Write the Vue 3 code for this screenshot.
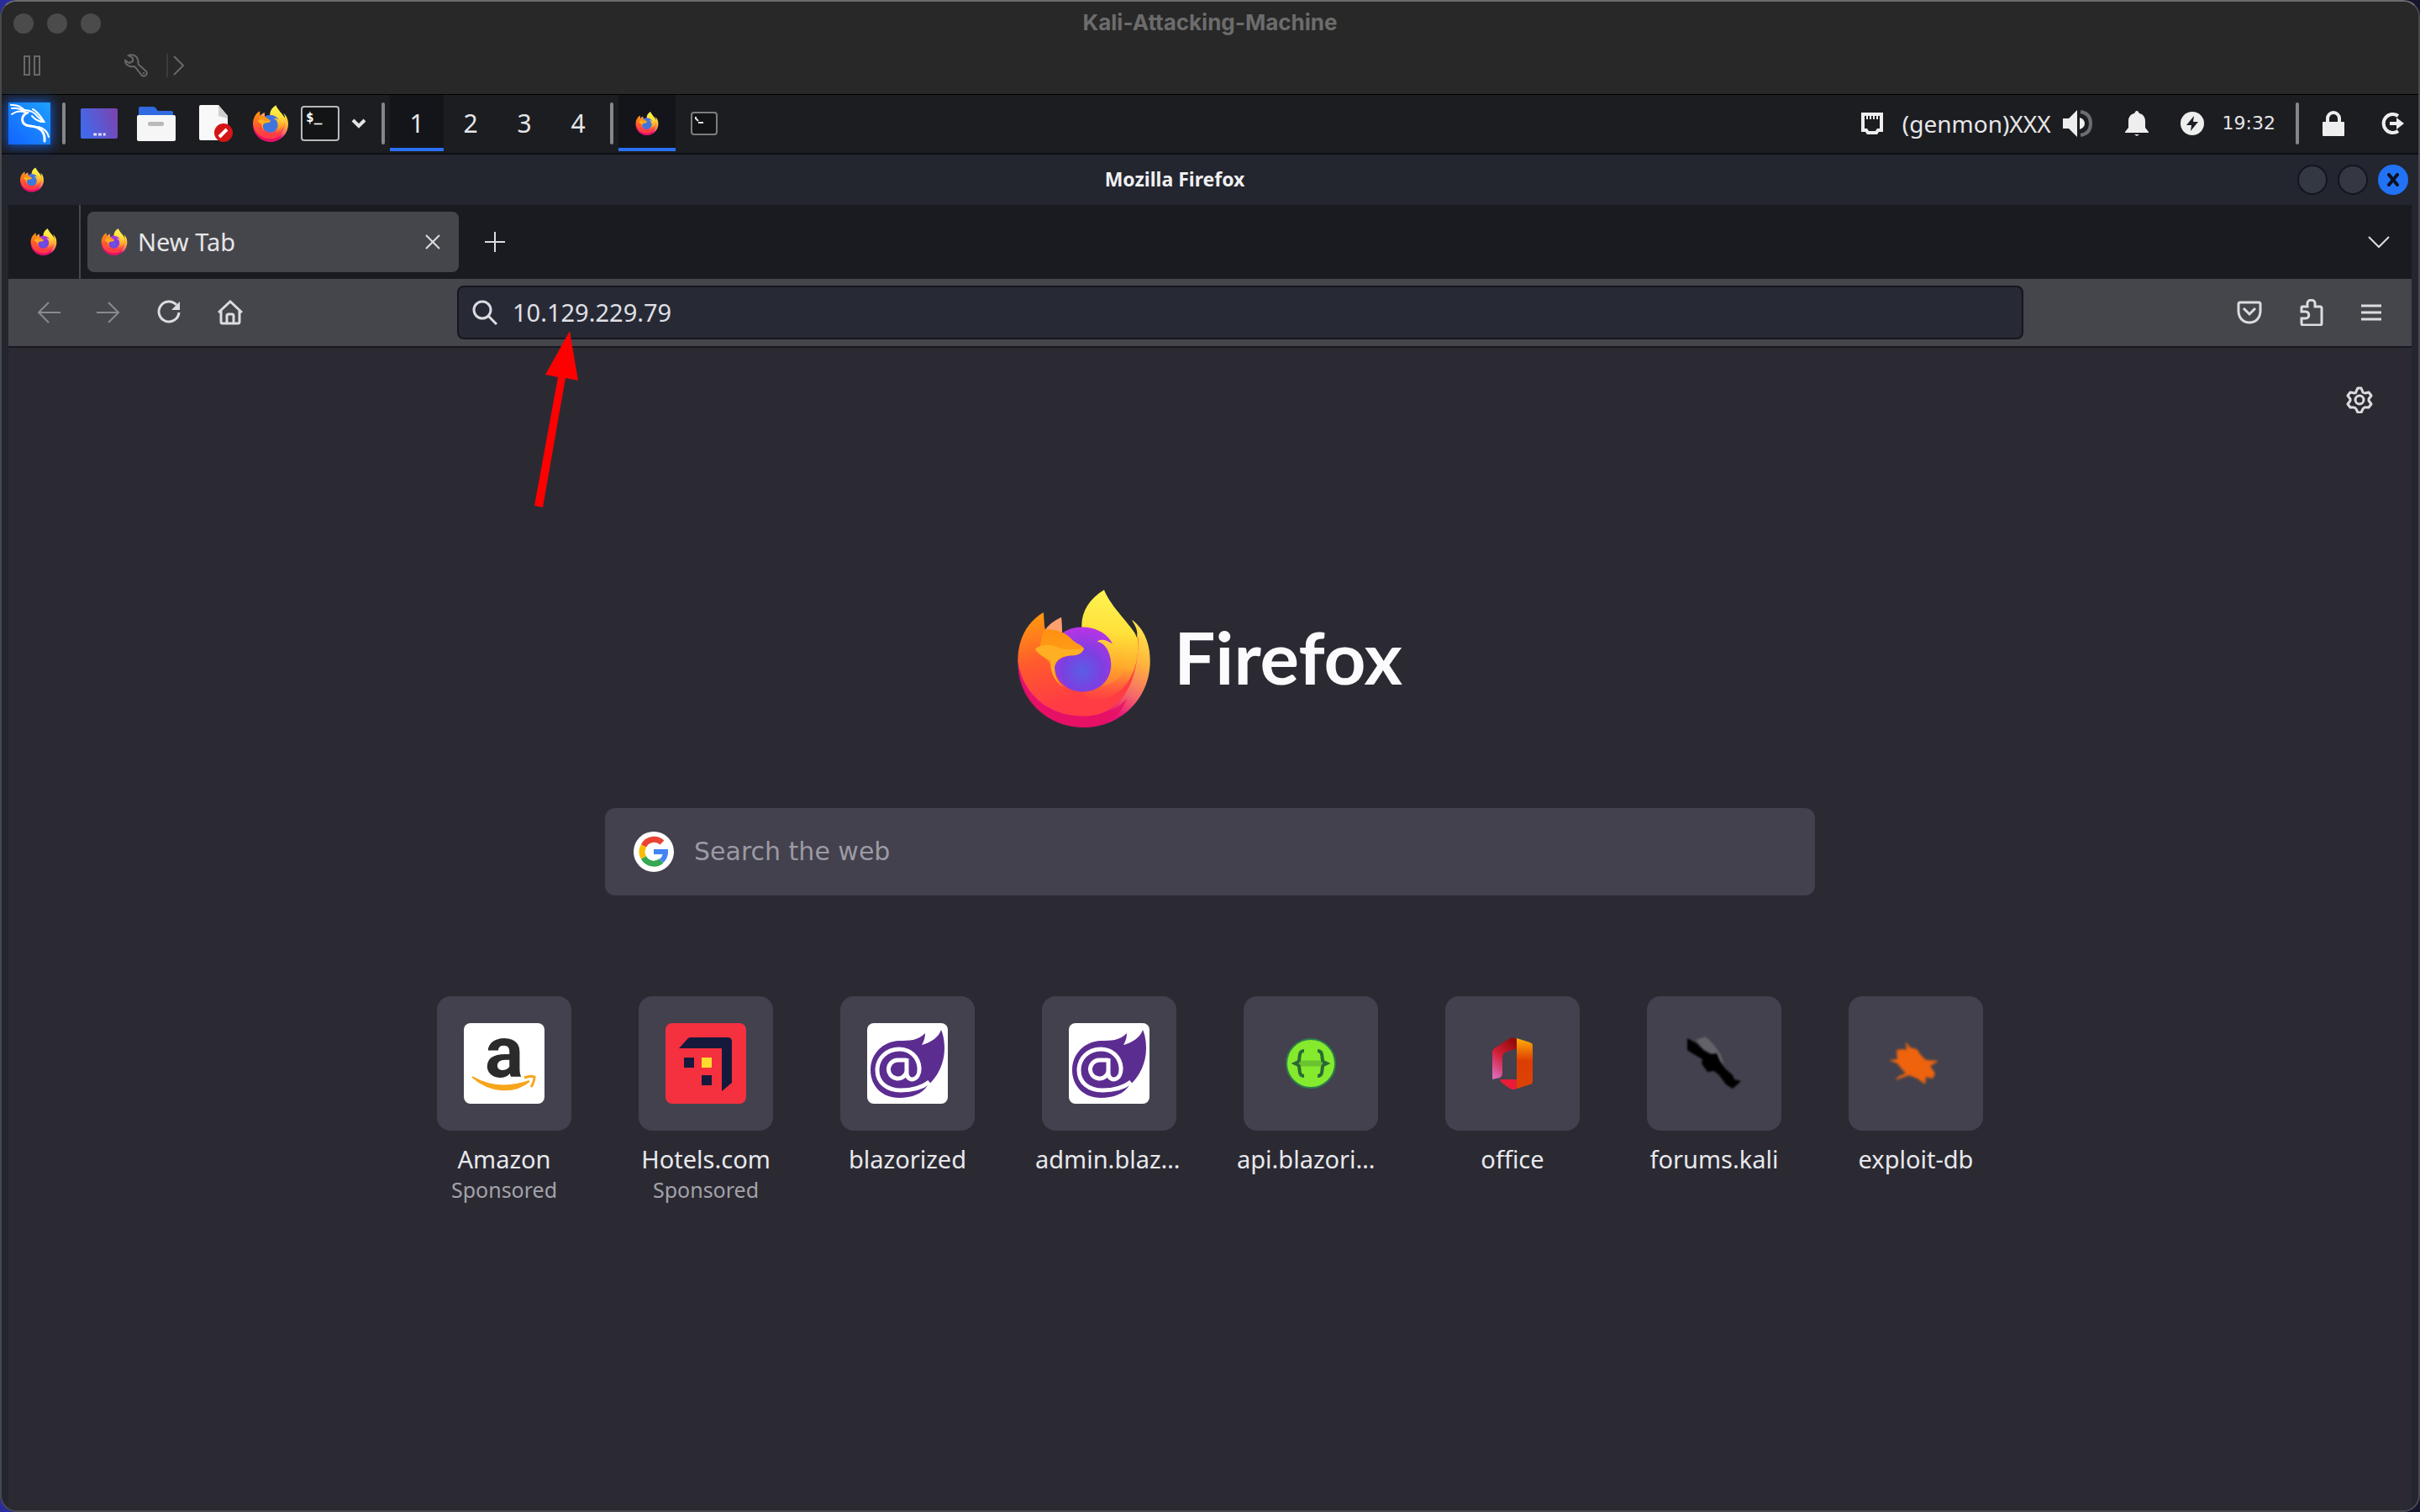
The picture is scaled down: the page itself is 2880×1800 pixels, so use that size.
<script setup>
import { ref } from 'vue'

const address = ref('10.129.229.79')
const query = ref('')
const workspaces = [1, 2, 3, 4]
const activeWorkspace = ref(1)

const sites = [
  { name: 'Amazon', icon: 'amazon', sponsored: true },
  { name: 'Hotels.com', icon: 'hotels', sponsored: true },
  { name: 'blazorized', icon: 'blazor' },
  { name: 'admin.blaz…', icon: 'blazor', long: true },
  { name: 'api.blazori…', icon: 'swagger', long: true },
  { name: 'office', icon: 'office' },
  { name: 'forums.kali', icon: 'forums' },
  { name: 'exploit-db', icon: 'exploit' },
]
</script>

<template>
  <div class="desktop">
    <svg class="sprite" aria-hidden="true">
      <defs>
        <linearGradient id="ffOuter" gradientUnits="userSpaceOnUse" x1="560" y1="180" x2="390" y2="545">
          <stop offset="0" stop-color="#fff04c" />
          <stop offset=".35" stop-color="#ffb53c" />
          <stop offset=".65" stop-color="#f5696a" />
          <stop offset=".88" stop-color="#e6107a" />
        </linearGradient>
        <linearGradient id="ffBody" gradientUnits="userSpaceOnUse" x1="190" y1="150" x2="270" y2="470">
          <stop offset="0" stop-color="#ff980e" />
          <stop offset=".5" stop-color="#ff5a2e" />
          <stop offset="1" stop-color="#ff3b44" />
        </linearGradient>
        <linearGradient id="ffFlame" gradientUnits="userSpaceOnUse" x1="430" y1="70" x2="390" y2="480">
          <stop offset="0" stop-color="#fff352" />
          <stop offset=".35" stop-color="#ffe13a" />
          <stop offset=".65" stop-color="#ffab2c" />
          <stop offset="1" stop-color="#ff5a38" stop-opacity="0" />
        </linearGradient>
        <linearGradient id="ffCurl" gradientUnits="userSpaceOnUse" x1="420" y1="240" x2="420" y2="430">
          <stop offset="0" stop-color="#ffd63a" />
          <stop offset=".5" stop-color="#ffab2b" />
          <stop offset="1" stop-color="#ff6a33" />
        </linearGradient>
        <radialGradient id="ffCore" gradientUnits="userSpaceOnUse" cx="325" cy="355" r="160">
          <stop offset="0" stop-color="#5a5ee6" />
          <stop offset=".45" stop-color="#7c3fe0" />
          <stop offset="1" stop-color="#bc33e6" />
        </radialGradient>
        <linearGradient id="ffHead" gradientUnits="userSpaceOnUse" x1="200" y1="200" x2="200" y2="345">
          <stop offset="0" stop-color="#ff8f12" />
          <stop offset=".5" stop-color="#ff9a16" />
          <stop offset="1" stop-color="#ff6a2a" />
        </linearGradient>
        <linearGradient id="kaliBg" x1="0" y1="1" x2="1" y2="0">
          <stop offset="0" stop-color="#1263ff" />
          <stop offset="1" stop-color="#1ea0ff" />
        </linearGradient>
        <linearGradient id="deskBg" x1="0" y1="0.5" x2="1" y2="0.2">
          <stop offset="0" stop-color="#4169ec" />
          <stop offset="1" stop-color="#7b44ae" />
        </linearGradient>
        <linearGradient id="officeR" x1="0" y1="0" x2="0" y2="1">
          <stop offset="0" stop-color="#ffae08" />
          <stop offset=".45" stop-color="#dd3d00" />
          <stop offset="1" stop-color="#db4407" />
        </linearGradient>
        <linearGradient id="officeL" x1=".7" y1="0" x2=".2" y2="1">
          <stop offset="0" stop-color="#940b0b" />
          <stop offset=".5" stop-color="#d51f3a" />
          <stop offset="1" stop-color="#db6bb8" />
        </linearGradient>
        <filter id="soft"><feGaussianBlur stdDeviation="1" /></filter>
        <filter id="softer"><feGaussianBlur stdDeviation="1.6" /></filter>
      </defs>

      <symbol id="firefox" viewBox="94 64 474 494">
        <path fill="url(#ffOuter)" d="M94 318C94 455 200 558 331 558S568 455 568 320C568 255 545 203 503 172L523 236 331 330Z" />
        <path fill="#ffa070" d="M250 163C224 175 204 190 190 210L255 240C252 215 253 190 250 163Z" />
        <path fill="url(#ffBody)" d="M186 145C122 182 93 250 94 320 112 440 205 518 331 518 445 518 527 425 526 236L331 200 258 222 192 208C188 190 188 165 186 145Z" />
        <path fill="#e5105f" opacity=".75" d="M95 340C110 450 205 518 331 518 400 518 455 490 485 455 460 525 400 558 331 558 200 558 98 460 95 340Z" />
        <path fill="url(#ffFlame)" d="M403 65C350 97 320 145 323 200L331 440C370 480 440 450 475 412 515 365 530 300 523 236 500 190 430 130 403 65Z" />
        <path fill="#2b2a33" d="M500 170C500 190 512 210 520 236 527 215 515 190 500 170Z" />
        <path fill="url(#ffCore)" d="M225 345C222 295 240 240 254 219 300 185 395 190 432 255 450 360 405 430 328 430 270 430 230 390 225 345Z" />
        <path fill="currentColor" d="M225 345C222 295 240 240 254 219 300 185 395 190 432 255 450 360 405 430 328 430 270 430 230 390 225 345Z" />
        <path fill="url(#ffCurl)" d="M378 250C388 242 402 243 414 248L434 258C460 275 478 300 476 340 474 378 440 398 394 411 420 388 430 355 428 325 424 285 408 256 378 250Z" />
        <path fill="url(#ffHead)" d="M186 207C240 203 268 222 292 246 308 260 325 263 331 275 322 296 300 300 286 300 252 302 230 316 225 345 205 330 185 300 170 280Z" />
        <path fill="#ffb022" d="M156 277C180 255 225 262 240 272 270 284 305 276 331 275 324 294 308 300 286 300 252 302 232 314 226 338 224 375 240 405 268 418 235 405 210 370 210 320 190 305 170 300 156 277Z" />
      </symbol>

      <symbol id="hotels" viewBox="0 0 96 96">
        <rect width="96" height="96" rx="8" fill="#f5303f" />
        <path d="M16 30 26 19Q27 17 30 17H74Q79 17 79 22V71L67 81V30Z" fill="#151a3c" />
        <path d="M22 41H34V53H22ZM43 62H55V74H43Z" fill="#151a3c" />
        <path d="M43 41H55V53H43Z" fill="#fddb2f" />
      </symbol>
      <symbol id="blazor" viewBox="0 0 96 96">
        <rect width="96" height="96" rx="8" fill="#fff" />
        <path fill="#5c2d91" d="M88 8C85 17 76 23 65 26 68 21 69 16 69 12 60 21 50 21 38 21 18 22 4 37 4 56 4 75 18 89 38 89 53 89 66 84 72 74 82 66 92 50 92 30 92 20 90 12 88 8Z" />
        <g fill="none" stroke="#fff" stroke-width="5">
          <path d="M47 42V60C48 71 63 69 62 53 61 40 51 31 38 31 23 31 12 42 12 56 12 71 24 80 40 80 53 80 65 77 74 70" />
          <path d="M47 44H36A11 11 0 1 0 47 58" />
        </g>
      </symbol>
      <symbol id="swagger" viewBox="0 0 96 96">
        <circle cx="48" cy="48" r="29" fill="#85ea2d" stroke="#2d7e4b" stroke-width="2" />
        <g fill="none" stroke="#2b6a35" stroke-width="4">
          <path d="M40 33C32 33 36 44 33 46L29 48 33 50C36 52 32 63 40 63M56 33C64 33 60 44 63 46L67 48 63 50C60 52 64 63 56 63" />
          <path d="M35 48H61" stroke-width="7" opacity=".3" />
        </g>
      </symbol>
      <symbol id="office" viewBox="0 0 96 96">
        <path fill="url(#officeL)" d="M24 35Q24 31 28 29L45 18Q49 16 53 19V30L39 35Q36 37 36 40V60Q36 63 33 65L24 67Z" />
        <path fill="#e81c37" d="M33 67H53V78Q49 80 45 78L35 71Z" />
        <path fill="url(#officeR)" d="M53 18 69 23Q72 24 72 27V69Q72 72 69 73L53 78Z" />
      </symbol>
      <symbol id="forums" viewBox="0 0 96 96">
        <path fill="#626268" filter="url(#soft)" d="M26 20 38 16 48 26 56 38 60 50 50 40 34 30Z" />
        <path fill="#000" filter="url(#soft)" d="M16 18 27 24 36 33 44 37 51 36 55 46 61 54 70 62 72 67 80 69 70 78 62 73 54 62 48 57 40 58 33 48 34 43 22 36 16 32Z" />
      </symbol>
      <symbol id="exploit" viewBox="0 0 96 96">
        <path fill="#f0640f" filter="url(#softer)" d="M36 22 41 29 49 31 54 38 60 44 75 45 65 51 71 60 68 66 60 64 59 73 50 66 40 62 23 68 28 63 36 60 30 53 26 48 16 44 26 43 25 32 32 31 37 32Z" />
      </symbol>
    </svg>

    <div class="window">
      <header class="mac-bar">
        <div class="mac-title-row">
          <div class="lights"><i></i><i></i><i></i></div>
          <h1 class="mac-title">Kali-Attacking-Machine</h1>
          <span></span>
        </div>
        <div class="mac-tools">
          <button aria-label="Pause">
            <svg width="20" height="24"><path d="M1 1H7V23H1ZM13 1H19V23H13Z" /></svg>
          </button>
          <button class="wrench" aria-label="Settings">
            <svg width="28" height="28" viewBox="0 0 28 28"><path d="M5 2C9 0 15 2 16 7 17 9 16 11 17 13L26 21C28 24 25 28 21 26L13 16C11 14 10 16 7 15 3 14 1 12 1 8L6 11 10 9V5L5 2ZM22 23H24" /></svg>
          </button>
          <span class="tool-line"></span>
          <button aria-label="More">
            <svg width="14" height="24"><path d="M1 1 12 12 1 23" /></svg>
          </button>
        </div>
      </header>

      <nav class="panel">
        <button class="kali" aria-label="Applications">
          <svg width="50" height="50" viewBox="0 0 50 50">
            <rect width="50" height="50" fill="url(#kaliBg)" />
            <g fill="none" stroke="#fff" stroke-linecap="round">
              <path d="M3 3Q13 2 20 10M4 7Q12 6 20 11M4 14Q12 8 21 12" stroke-width="2" />
              <path d="M20 9Q30 10 34 16L42 23Q34 23 28 16" stroke-width="2" />
              <path d="M29 8Q34 10 42 22" stroke-width="2" />
              <path d="M23 12C14 16 14 27 26 28 38 29 44 35 43 46" stroke-width="3" />
              <path d="M36 29Q46 32 48 41" stroke-width="2" />
            </g>
          </svg>
        </button>
        <span class="sep"></span>
        <div class="launchers">
          <button aria-label="Show desktop">
            <svg width="44" height="36" viewBox="0 0 46 36" preserveAspectRatio="none"><rect width="46" height="36" rx="2" fill="url(#deskBg)" /><path d="M16 31H20M22 31H26M28 31H31" stroke="#dfe0ff" stroke-width="3" /></svg>
          </button>
          <button aria-label="Files">
            <svg width="46" height="42" viewBox="0 0 46 42"><path d="M2 3Q2 1 4 1H19Q22 1 24 5L25 6H41Q43 6 43 8V14H2Z" fill="#3069e0" /><rect y="11" width="46" height="31" rx="2" fill="#f6f6f6" /><rect x="13" y="19" width="19" height="5" rx="2" fill="#b9b9b9" /></svg>
          </button>
          <button aria-label="Text editor">
            <svg width="42" height="46" viewBox="0 0 42 46"><path d="M1 3Q1 1 3 1H24L35 14V43H3Q1 43 1 41Z" fill="#f8f8f8" /><path d="M24 1 35 14V17L24 14Z" fill="#cfcfcf" /><circle cx="30" cy="34" r="11" fill="#d51515" /><path d="M25 39 34 30" stroke="#fff" stroke-width="4" /></svg>
          </button>
          <button aria-label="Firefox"><svg class="fox blue" width="42" height="44"><use href="#firefox" /></svg></button>
          <div class="term-group">
            <button aria-label="Terminal">
              <svg width="46" height="42" viewBox="0 0 46 42"><rect x="1" y="1" width="44" height="40" rx="3" fill="#131415" stroke="#b8b9ba" stroke-width="2" /><text x="6" y="19" class="prompt">$_</text></svg>
            </button>
            <button aria-label="More terminals"><svg width="18" height="12" viewBox="0 0 18 12"><path d="M2 2 9 9 16 2" fill="none" stroke="#e4e4e4" stroke-width="4" /></svg></button>
          </div>
        </div>
        <span class="sep"></span>
        <div class="spaces">
          <button v-for="n in workspaces" :key="n" :class="{ on: n === activeWorkspace }" @click="activeWorkspace = n">{{ n }}</button>
        </div>
        <span class="sep"></span>
        <div class="spaces">
          <button class="task on" aria-label="Mozilla Firefox"><svg class="fox blue" width="28" height="28"><use href="#firefox" /></svg></button>
          <button class="task" aria-label="Terminal window">
            <svg width="32" height="28" viewBox="0 0 32 28"><rect x="1" y="1" width="30" height="26" rx="3" fill="#131415" stroke="#7c7d7f" stroke-width="2" /><path d="M6 6V8L9 11M9 13H15" stroke="#e6e6e6" stroke-width="2" fill="none" /></svg>
          </button>
        </div>
        <div class="tray">
          <svg width="28" height="26" viewBox="0 0 28 26"><path d="M3 2H25V21H21L19 24H9L7 21H3Z" fill="none" stroke="#eee" stroke-width="4" /><path d="M8 2V8M12 2V8M16 2V8M20 2V8" stroke="#eee" stroke-width="2" /></svg>
          <span class="genmon">(genmon)XXX</span>
          <svg width="36" height="32" viewBox="0 0 36 32"><path d="M0 10H7L17 0V32L7 22H0Z" fill="#eee" /><path d="M20 9Q26 11 26 16T20 23Z" fill="#eee" /><path d="M21 2Q33 4 33 16T21 30" fill="none" stroke="#6c6d70" stroke-width="4" /></svg>
          <svg width="28" height="30" viewBox="0 0 28 30"><path d="M14 0C16 0 16 2 17 3 22 4 24 8 24 12V20L28 25V26H0V25L4 20V12C4 8 6 4 11 3 12 2 12 0 14 0ZM11 28H17L14 30Z" fill="#eee" /></svg>
          <svg width="28" height="28" viewBox="0 0 28 28"><circle cx="14" cy="14" r="14" fill="#eee" /><path d="M16 5 7 16H13L12 23 21 12H15Z" fill="#1c1d21" /></svg>
          <time class="clock">19:32</time>
          <span class="sep"></span>
          <button aria-label="Lock"><svg width="26" height="30" viewBox="0 0 26 30"><rect y="13" width="26" height="17" rx="1" fill="#eee" /><path d="M6 14V9A7 7 0 0 1 20 9V14" fill="none" stroke="#eee" stroke-width="4" /></svg></button>
          <button aria-label="Log out"><svg width="30" height="28" viewBox="0 0 30 28"><path d="M22 5A11 11 0 1 0 22 23" fill="none" stroke="#eee" stroke-width="4" /><path d="M12 12H20V7L29 14 20 21V16H12Z" fill="#eee" /></svg></button>
        </div>
      </nav>

      <section class="browser">
        <div class="browser-title">
          <svg class="fox blue" width="28" height="30"><use href="#firefox" /></svg>
          <h2>Mozilla Firefox</h2>
          <div class="win-buttons">
            <button aria-label="Minimize"></button>
            <button aria-label="Maximize"></button>
            <button class="close" aria-label="Close"><svg width="16" height="16" viewBox="0 0 16 16"><path d="M3 2 13 14M13 2 3 14" stroke="#0c1020" stroke-width="4" stroke-linecap="round" /></svg></button>
          </div>
        </div>

        <div class="tabs">
          <button class="pinned" aria-label="Firefox View"><svg class="fox" width="32" height="32"><use href="#firefox" /></svg></button>
          <div class="tab">
            <svg class="fox" width="32" height="32"><use href="#firefox" /></svg>
            <span>New Tab</span>
            <button aria-label="Close tab"><svg class="line" width="18" height="18"><path d="M1 1 17 17M17 1 1 17" /></svg></button>
          </div>
          <button class="add" aria-label="New tab"><svg class="line" width="24" height="24"><path d="M12 0V24M0 12H24" /></svg></button>
          <button class="all-tabs" aria-label="List all tabs"><svg class="line" width="26" height="16"><path d="M1 2 13 14 25 2" /></svg></button>
        </div>

        <div class="toolbar">
          <div class="nav-buttons">
            <button class="dim" aria-label="Back"><svg class="line" width="28" height="28"><path d="M28 14H2M14 2 2 14 14 26" /></svg></button>
            <button class="dim" aria-label="Forward"><svg class="line" width="28" height="28"><path d="M0 14H26M14 2 26 14 14 26" /></svg></button>
            <button aria-label="Reload"><svg class="line bold" width="30" height="30"><path d="M24 6A12 12 0 1 0 27 15" /><path d="M28 2V12H18Z" fill="#dcdce0" stroke="none" /></svg></button>
            <button aria-label="Home"><svg class="line bold" width="30" height="30"><path d="M1 15 15 2 29 15M4 13V26Q4 28 6 28H24Q26 28 26 26V13M11 28V19Q11 17 13 17H17Q19 17 19 19V28" /></svg></button>
          </div>
          <div class="address">
            <svg class="line bold" width="30" height="30"><circle cx="12" cy="12" r="10" /><path d="M19 19 29 29" /></svg>
            <input v-model="address" aria-label="Address" />
            <svg class="pointer" width="56" height="212" viewBox="0 0 56 212" aria-hidden="true"><path d="M42 0 52 59 37 56 10 210 0 208 28 55 13 52Z" fill="#f00" /></svg>
          </div>
          <div class="tool-buttons">
            <button aria-label="Pocket"><svg class="line bold" width="30" height="28"><path d="M4 2H26Q28 2 28 4V12C28 21 22 26 15 26S2 21 2 12V4Q2 2 4 2ZM8 9 15 16 22 9" /></svg></button>
            <button aria-label="Extensions"><svg class="line bold" width="28" height="32" viewBox="0 0 28 32"><path d="M3 9H9V5C9 0 18 0 18 5V9H24Q26 9 26 11V29Q26 31 24 31H4Q2 31 2 29V23H7C12 23 12 15 7 15H2V10Q2 9 3 9Z" /></svg></button>
            <button aria-label="Menu"><svg class="line bold" width="24" height="22"><path d="M0 3H24M0 11H24M0 19H24" /></svg></button>
          </div>
        </div>

        <main class="page">
          <div class="page-top">
            <button aria-label="Personalize new tab"><svg class="line bold" width="32" height="32" viewBox="0 0 32 32"><path d="M14 2H18L20 7Q21 8 23 8L27 7 30 11 27 15V17L30 21 27 25 22 25Q20 26 20 27L18 31H14L12 27Q11 25 9 25L5 25 2 21 5 17V15L2 11 5 7 10 8Q12 8 12 6Z" stroke-linejoin="round" /><circle cx="16" cy="16" r="5" /></svg></button>
          </div>
          <div class="brand">
            <svg class="fox" width="158" height="164"><use href="#firefox" /></svg>
            <span>Firefox</span>
          </div>
          <form class="search" @submit.prevent>
            <svg width="48" height="48" viewBox="0 0 48 48">
              <circle cx="24" cy="24" r="24" fill="#fff" />
              <g fill="none" stroke-width="7">
                <path d="M34 13A14 14 0 0 0 12 17" stroke="#ea4335" />
                <path d="M12 17A14 14 0 0 0 12 31" stroke="#fbbc05" />
                <path d="M12 31A14 14 0 0 0 33 35" stroke="#34a853" />
                <path d="M33 35Q38 31 38 24H24" stroke="#4285f4" stroke-width="6" />
              </g>
            </svg>
            <input v-model="query" placeholder="Search the web" aria-label="Search the web" />
          </form>
          <ul class="sites">
            <li v-for="s in sites" :key="s.name">
              <a href="#">
                <span class="tile">
                  <svg v-if="s.icon === 'amazon'" width="96" height="96" viewBox="0 0 96 96">
                    <rect width="96" height="96" rx="8" fill="#fff" />
                    <text x="25" y="64" class="amazon-a">a</text>
                    <path d="M10 64C32 83 60 84 78 69 58 76 34 78 10 64Z" fill="#f7a51b" stroke="#f7a51b" stroke-width="2" />
                    <path d="M72 65Q80 62 84 64 84 70 80 76" fill="none" stroke="#f7a51b" stroke-width="3" />
                  </svg>
                  <svg v-else width="96" height="96"><use :href="'#' + s.icon" /></svg>
                </span>
                <span class="name" :class="{ long: s.long }">{{ s.name }}</span>
                <span v-if="s.sponsored" class="sponsored">Sponsored</span>
              </a>
            </li>
          </ul>
        </main>
      </section>
    </div>
  </div>
</template>

<style>
body { margin: 0; background: #0c0e22; }
</style>

<style scoped>
.desktop {
  min-height: 100vh;
  display: flex;
  background: linear-gradient(90deg, #2a2c9c, #10123a 30%, #15162e);
  font-family: "Noto Sans", sans-serif;
  color: #e6e6e8;
}
.sprite { position: absolute; width: 0; height: 0; }
.amazon-a { font: bold 86px Roboto, sans-serif; fill: #2b2b2b; }
.prompt { font: bold 16px "DejaVu Sans Mono", monospace; fill: #fff; }
button {
  display: flex;
  align-items: center;
  justify-content: center;
  padding: 0;
  border: 0;
  background: none;
  color: inherit;
  font: inherit;
}
input {
  flex: 1;
  min-width: 0;
  padding: 0;
  border: 0;
  outline: 0;
  background: none;
}
svg { flex: none; display: block; }
.fox { color: transparent; }
.fox.blue { color: #3f76dd; }
.line { fill: none; stroke: #dcdce0; stroke-width: 2; }
.line.bold { stroke-width: 3; }

.window {
  flex: 1;
  min-width: 0;
  display: flex;
  flex-direction: column;
  box-sizing: border-box;
  border: 2px solid #48494d;
  border-top-color: #6c6c6c;
  border-radius: 20px;
  background: #23252f;
  overflow: hidden;
}

.mac-bar { height: 110px; background: #282828; border-bottom: 1px solid #000; }
.mac-title-row { display: grid; grid-template-columns: 1fr auto 1fr; align-items: center; height: 52px; padding: 0 14px; }
.lights { display: flex; gap: 16px; }
.lights i { width: 24px; height: 24px; border-radius: 50%; background: #4b4b4b; }
.mac-title { margin: 0 0 2px; font: 700 26px/32px Inter, sans-serif; color: #6c6c6c; }
.mac-tools { display: flex; align-items: center; height: 48px; padding-left: 26px; }
.mac-tools svg { fill: none; stroke: #686868; stroke-width: 2; }
.wrench { margin-left: 100px; }
.tool-line { width: 2px; height: 28px; margin: 0 6px 0 22px; background: #3b3b3b; }

.panel { display: flex; align-items: center; box-sizing: border-box; height: 71px; padding: 0 16px 2px 8px; background: #1c1d21; border-bottom: 2px solid #0d0e14; }
.kali { box-shadow: 0 0 12px 2px #1556c8; margin-right: 14px; }
.sep { flex: none; width: 4px; height: 50px; border-radius: 2px; background: #86868a; }
.launchers { display: flex; align-items: center; gap: 23px; padding: 0 18px; }
.launchers > :nth-child(3) { margin: 0 0 0 4px; }
.term-group { display: flex; align-items: center; gap: 14px; margin-left: -8px; }
.spaces { display: flex; align-self: stretch; padding: 0 6px; }
.spaces button { width: 64px; border-bottom: 4px solid transparent; border-top: 4px solid transparent; font-size: 30px; line-height: 40px; }
.spaces .task { width: 68px; }
.spaces .on { background: #14151b; border-bottom-color: #2a70f2; border-top-color: #14151b; }
.tray { display: flex; align-items: center; margin-left: auto; }
.genmon { margin: 0 14px 0 22px; font-size: 28px; line-height: 40px; }
.tray svg + svg { margin-left: 38px; }
.clock { margin: 0 24px 0 22px; font: 22px/32px "DejaVu Sans", sans-serif; }
.tray button { margin-left: 28px; }
.tray button + button { margin-left: 42px; }

.browser { flex: 1; display: flex; flex-direction: column; padding: 0 8px; }
.browser-title { display: flex; align-items: center; height: 60px; padding: 0 4px 0 14px; }
.browser-title h2 { flex: 1; margin: 0 0 2px 10px; text-align: center; font: bold 23px/32px "Noto Sans", sans-serif; color: #f0f0f2; }
.win-buttons { display: flex; gap: 12px; }
.win-buttons button { box-sizing: border-box; width: 36px; height: 36px; border: 2px solid #14161f; border-radius: 50%; background: #343843; }
.win-buttons .close { border: 0; background: #2272f5; }

.tabs { display: flex; align-items: center; height: 88px; padding-right: 26px; background: #1a1b20; }
.pinned { width: 86px; align-self: stretch; border-right: 2px solid #47484c; }
.tab { display: flex; align-items: center; gap: 12px; box-sizing: border-box; width: 442px; height: 72px; margin-left: 8px; padding: 0 22px 0 16px; border-radius: 8px; background: #45464c; }
.tab span { flex: 1; font-size: 29px; line-height: 36px; }
.add { margin-left: 31px; }
.all-tabs { margin-left: auto; }

.toolbar { display: flex; align-items: center; justify-content: space-between; height: 80px; padding: 0 36px 0 34px; background: #45464c; border-bottom: 2px solid #171820; }
.nav-buttons { display: flex; gap: 43px; width: 500px; }
.dim { opacity: .45; }
.address { position: relative; flex: 1; display: flex; align-items: center; gap: 18px; box-sizing: border-box; height: 64px; padding: 0 16px; border: 2px solid #15161d; border-radius: 8px; background: #272a35; }
.address input { font: 29px/36px "Noto Sans", sans-serif; color: #e0e0e6; }
.pointer { position: absolute; left: 90px; top: 52px; z-index: 2; }
.tool-buttons { display: flex; align-items: center; justify-content: flex-end; gap: 45px; width: 426px; }

.page { flex: 1; display: flex; flex-direction: column; align-items: center; background: #2b2a33; }
.page-top { align-self: stretch; display: flex; justify-content: flex-end; padding: 46px 46px 0 0; }
.brand { display: flex; align-items: center; gap: 28px; margin-top: 210px; }
.brand span { margin-bottom: 4px; font: bold 87px/104px Lato, sans-serif; color: #fbfbfe; }
.search { display: flex; align-items: center; gap: 24px; box-sizing: border-box; width: 50%; min-width: 1440px; height: 104px; margin-top: 96px; padding: 0 34px; border-radius: 12px; background: #42414d; }
.search input { font: 30px/40px "DejaVu Sans", sans-serif; color: #fbfbfe; }
.search input::placeholder { color: #9b9aa3; opacity: 1; }
.sites { display: flex; gap: 64px; margin: 120px 0 80px; padding: 0; list-style: none; }
.sites a { display: flex; flex-direction: column; align-items: center; width: 176px; color: #fbfbfe; text-decoration: none; }
.tile { display: flex; align-items: center; justify-content: center; width: 160px; height: 160px; border-radius: 16px; background: #42414d; }
.name { margin-top: 14px; white-space: nowrap; font-size: 29px; line-height: 40px; color: #e8e8ec; }
.name.long { align-self: stretch; }
.sponsored { font-size: 25px; line-height: 32px; color: #a3a2aa; }
</style>
